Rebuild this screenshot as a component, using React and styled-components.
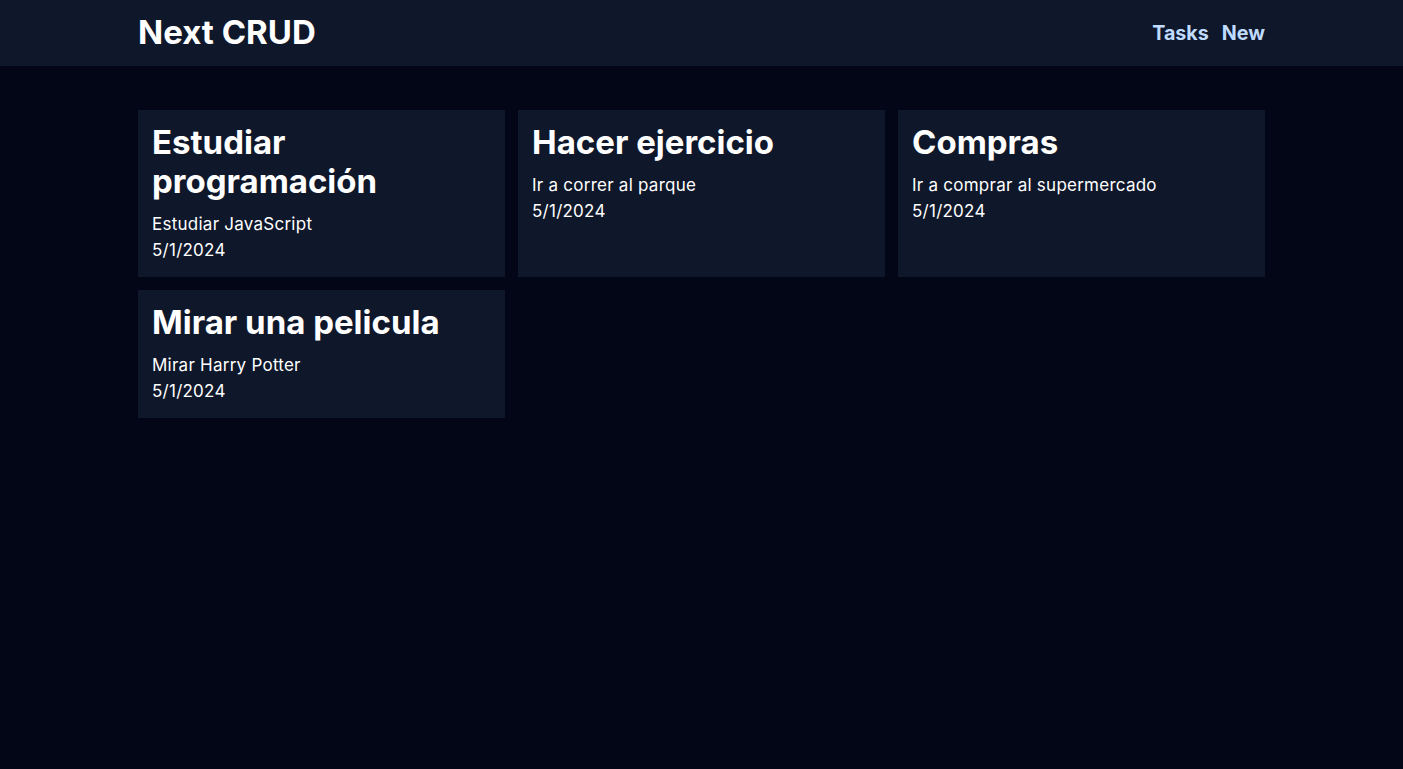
import styled, { createGlobalStyle } from 'styled-components';

const GlobalStyle = createGlobalStyle`
  html, body {
    margin: 0;
    padding: 0;
    background-color: #020617;
    font-family: Inter, "Noto Sans", sans-serif;
    color: #ffffff;
  }
  * {
    box-sizing: border-box;
  }
`;

const NavbarStyled = styled.nav`
  background-color: #0f172a;
  height: 66px;
`;

const Container = styled.div`
  width: 1127px;
  margin: 0 auto;
`;

const NavInner = styled(Container)`
  height: 100%;
  display: flex;
  align-items: center;
  justify-content: space-between;
  padding-bottom: 2px;
`;

const Brand = styled.h3`
  margin: 0;
  font-size: 33px;
  font-weight: 700;
  color: #ffffff;
`;

const NavLinks = styled.ul`
  list-style: none;
  margin: 0;
  padding: 2px 0 0;
  display: flex;
  gap: 13px;
`;

const NavLink = styled.li`
  font-size: 19.7px;
  font-weight: 700;
  color: #bfdbfe;
  cursor: pointer;
`;

const Main = styled(Container)`
  padding-top: 44px;
`;

const Grid = styled.div`
  display: grid;
  grid-template-columns: repeat(3, 1fr);
  gap: 13px;
`;

const Card = styled.div`
  background-color: #0f172a;
  padding: 13px 14px 14px;
  cursor: pointer;
`;

const CardTitle = styled.h3`
  margin: 0 0 10px;
  font-size: 33px;
  line-height: 39px;
  font-weight: 700;
`;

const CardText = styled.p`
  margin: 0;
  font-size: 17px;
  line-height: 26px;
  letter-spacing: 0.25px;
`;

const tasks = [
  { id: 1, title: 'Estudiar programación', description: 'Estudiar JavaScript', createdAt: '5/1/2024' },
  { id: 2, title: 'Hacer ejercicio', description: 'Ir a correr al parque', createdAt: '5/1/2024' },
  { id: 3, title: 'Compras', description: 'Ir a comprar al supermercado', createdAt: '5/1/2024' },
  { id: 4, title: 'Mirar una pelicula', description: 'Mirar Harry Potter', createdAt: '5/1/2024' },
];

const Navbar = () => (
  <NavbarStyled>
    <NavInner>
      <Brand>Next CRUD</Brand>
      <NavLinks>
        <NavLink>Tasks</NavLink>
        <NavLink>New</NavLink>
      </NavLinks>
    </NavInner>
  </NavbarStyled>
);

export default function App() {
  return (
    <>
      <GlobalStyle />
      <Navbar />
      <Main>
        <Grid>
          {tasks.map(task => (
            <Card key={task.id}>
              <CardTitle>{task.title}</CardTitle>
              <CardText>{task.description}</CardText>
              <CardText>{task.createdAt}</CardText>
            </Card>
          ))}
        </Grid>
      </Main>
    </>
  );
}
